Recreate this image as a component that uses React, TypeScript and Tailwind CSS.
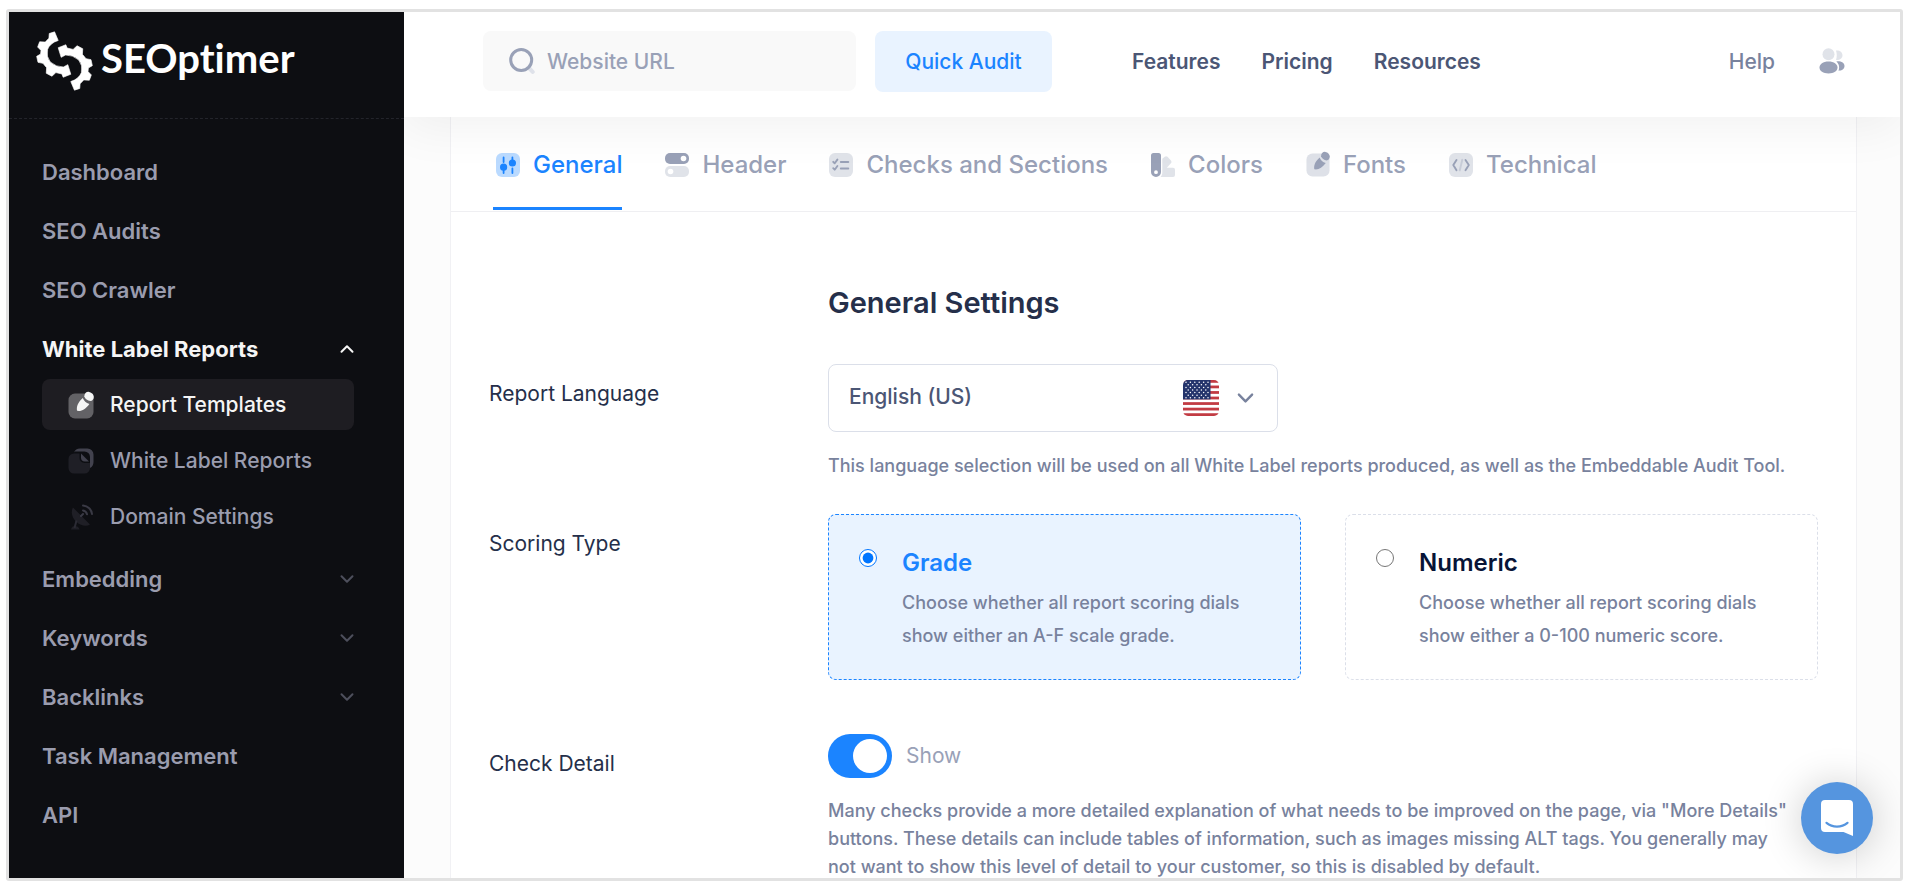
import React, { useState } from "react";

const GEAR_HALF =
  "M162 96 L146 101 L145 115 L134 127 L117 126 L111 142 L121 152 L120 163 L108 170 L112 188 L127 191 L138 204 L137 221 L154 230 L166 219 L184 223 L188 233 L211 224 L202 195 L189 202 Q167 203 149 187 Q136 171 141 149 Q148 130 173 122 Z";

function Logo() {
  return (
    <a href="#" className="flex h-[106px] items-start pt-[19px] pl-[27px] text-white">
      <svg viewBox="106 94 172 180" className="h-[60px] w-[57px] shrink-0" fill="currentColor" aria-hidden="true">
        <path d={GEAR_HALF} stroke="currentColor" strokeWidth="2" strokeLinejoin="round" />
        <path d={GEAR_HALF} transform="rotate(180 192 184)" stroke="currentColor" strokeWidth="2" strokeLinejoin="round" />
      </svg>
      <span className="ml-2 pt-[7px] font-['Lato',sans-serif] text-[40px] leading-[40px] font-bold [font-variant-ligatures:none]">SEOptimer</span>
    </a>
  );
}

function Chevron({ up = false, className = "" }: { up?: boolean; className?: string }) {
  return (
    <svg viewBox="0 0 14 10" className={className} fill="none" stroke="currentColor" strokeWidth="2" strokeLinecap="round" strokeLinejoin="round" aria-hidden="true">
      <path d={up ? "M1.5 7.8 7 2.2l5.500 5.600" : "M1.500 2.200 7 7.800l5.500-5.600"} />
    </svg>
  );
}

function PenIcon({ className = "" }: { className?: string }) {
  return (
    <svg viewBox="0 0 26 28" className={className} fill="currentColor" aria-hidden="true">
      <rect x="0.500" y="2.500" width="25" height="25" rx="6.500" opacity="0.320" />
      <path d="M9 19.800c-.5-4.300.3-7.800 5.800-12.900 1.200 3 3.200 5 6.600 6-4 5.200-7.200 7.500-12.400 6.900z" />
      <path d="M16.300 5.600C16.300 2.500 18.500.500 21 .900c2.800.5 4.900 2.700 4.800 5.300-.1 2-1.500 3.700-3.400 3.900-3-.4-5.200-2-6.100-4.500z" />
    </svg>
  );
}

function DocsIcon() {
  return (
    <svg viewBox="0 0 26 26" className="h-[26px] w-[26px]" aria-hidden="true">
      <path d="M6 4.500C7 2 9 .5 12 .5h7.500a6 6 0 0 1 6 6V14c0 2.600-1 4.700-3.500 6V9a5.500 5.500 0 0 0-5.500-5.500H6z" fill="#42424e" />
      <path d="M6 5.500h5.500V10a5 5 0 0 0 5 5H22v5a5.500 5.500 0 0 1-5.500 5.500H6A5.500 5.500 0 0 1 .5 20v-9A5.500 5.500 0 0 1 6 5.500z" fill="#1f1f26" />
      <path d="M13 5.500l8 8h-4a4 4 0 0 1-4-4z" fill="#42424e" />
    </svg>
  );
}

function DishIcon() {
  return (
    <svg viewBox="0 0 26 26" className="h-[26px] w-[26px]" aria-hidden="true">
      <path d="M5 3.500C2.500 8 4 14 8.500 18s10 4.600 13.500 2.500z" fill="#1f1f26" />
      <path d="M3 25.500c.5-2.500 2-3.500 4-3.500s4 1 4.500 3.500z" fill="#1f1f26" />
      <path d="M8.500 16.500 6.500 24" stroke="#2b2b34" strokeWidth="2" />
      <path d="M13 12l2-2M15 6.500c2 .3 3.500 1.600 4 3.800M15 1.500c5 .4 8.600 4 9 8.500" stroke="#3a3a45" strokeWidth="2" strokeLinecap="round" fill="none" />
    </svg>
  );
}

function SlidersIcon() {
  return (
    <svg viewBox="0 0 24 24" className="h-6 w-6" aria-hidden="true">
      <rect width="24" height="24" rx="6" fill="currentColor" opacity="0.300" />
      <g stroke="currentColor" strokeWidth="1.800" strokeLinecap="round" fill="currentColor">
        <path d="M7.600 4.500v4.500M7.600 17v3M16.400 4.500v2.500M16.400 15.500V20" />
        <circle cx="7.600" cy="14.200" r="2.700" />
        <circle cx="16.400" cy="10" r="2.700" />
      </g>
    </svg>
  );
}

function SwitchesIcon() {
  return (
    <svg viewBox="0 0 24 24" className="h-6 w-6" aria-hidden="true">
      <rect width="24" height="11" rx="5" fill="currentColor" />
      <circle cx="18.500" cy="5.500" r="2.800" fill="white" />
      <rect y="13" width="24" height="11" rx="5" fill="currentColor" opacity="0.300" />
      <circle cx="5.500" cy="18.500" r="2.800" fill="white" />
    </svg>
  );
}

function ChecklistIcon() {
  return (
    <svg viewBox="0 0 24 24" className="h-6 w-6" aria-hidden="true">
      <rect width="24" height="24" rx="6" fill="currentColor" opacity="0.300" />
      <g stroke="currentColor" strokeWidth="1.900" strokeLinecap="round" strokeLinejoin="round" fill="none">
        <path d="M4.200 8.800l1.500 1.500L8.400 6.600M4.200 15.200l1.500 1.500 2.700-3.700M11.800 9h7.500M11.800 15.500h7.500" />
      </g>
    </svg>
  );
}

function SwatchIcon() {
  return (
    <svg viewBox="0 0 24 24" className="h-6 w-6" aria-hidden="true">
      <path
        fillRule="evenodd"
        d="M2.500 0h5A2.500 2.500 0 0 1 10 2.500V19a5 5 0 0 1-10 0V2.500A2.500 2.500 0 0 1 2.500 0zM5 17.300a1.900 1.900 0 1 0 0 3.800 1.900 1.900 0 0 0 0-3.800z"
        fill="currentColor"
      />
      <path
        d="M11.300 5.800l2.400-2c1-.8 2-.8 2.800 0l3.400 3.700c.8.900.8 2 0 2.800L15.800 14.700H22a2 2 0 0 1 2 2V22a2 2 0 0 1-2 2H9.500c1.200-1.200 1.800-2.800 1.800-4.500z"
        fill="currentColor"
        opacity="0.300"
      />
    </svg>
  );
}

function CodeIcon() {
  return (
    <svg viewBox="0 0 24 24" className="h-6 w-6" aria-hidden="true">
      <rect width="24" height="24" rx="6" fill="currentColor" opacity="0.300" />
      <g stroke="currentColor" strokeWidth="1.900" strokeLinecap="round" strokeLinejoin="round" fill="none">
        <path d="M7.500 7 4.300 12l3.200 5.200M16.500 7l3.300 5-3.300 5.200" />
        <path d="M13.300 6.800l-2.600 10.600" opacity="0.350" />
      </g>
    </svg>
  );
}

function UsersIcon() {
  return (
    <svg viewBox="0 0 26 26" className="h-[26px] w-[26px] text-[#99a1b7]" fill="currentColor" aria-hidden="true">
      <ellipse cx="9.500" cy="6.300" rx="6" ry="6" opacity="0.300" />
      <path d="M17 2.500c3.800-.3 6.500 1.800 6.500 4.800s-2.700 5-6.500 4.700c1-3 1-6.500 0-9.500z" opacity="0.300" />
      <path d="M9.500 13.500c5.500 0 9 2.600 9 6.100 0 3.600-3.700 5.900-9 5.900s-9-2.300-9-5.900c0-3.500 3.500-6.100 9-6.100z" />
      <path d="M18.500 13.300c4.500 0 7 1.900 7 4.700 0 3-2.500 4.700-6 4.700 1.200-3 .9-6.600-2.200-9.300z" />
    </svg>
  );
}

function FlagIcon() {
  const stars: [number, number][] = [];
  for (let row = 0; row < 7; row++) {
    for (let col = 0; col < 6 - (row % 2); col++) {
      stars.push([3 + col * 4.400 + (row % 2) * 2.200, 2.200 + row * 2.600]);
    }
  }
  return (
    <svg viewBox="0 0 36 36" className="h-9 w-9" aria-hidden="true">
      <clipPath id="flag-shape">
        <rect width="36" height="36" rx="5" />
      </clipPath>
      <g clipPath="url(#flag-shape)">
        <rect width="36" height="36" fill="#ffffff" />
        {[0, 1, 2, 3, 4, 5, 6].map((i) => (
          <rect key={i} y={i * 5.540} width="36" height="2.770" fill="#c23b43" />
        ))}
        <rect width="27.500" height="19.400" fill="#25356c" />
        {stars.map(([cx, cy]) => (
          <circle key={cx + "-" + cy} cx={cx} cy={cy} r="0.750" fill="#ffffff" />
        ))}
      </g>
    </svg>
  );
}

function NavItem({ label, chevron = false }: { label: string; chevron?: boolean }) {
  return (
    <a href="#" className="flex h-[59px] items-center justify-between text-[22px] leading-7 font-semibold text-[#9a9cae]">
      {label}
      {chevron && <Chevron className="h-[10px] w-[14px] text-[#4d4f5c]" />}
    </a>
  );
}

function SubItem({ label, icon, active = false }: { label: string; icon: React.ReactNode; active?: boolean }) {
  return (
    <a
      href="#"
      className={
        active
          ? "flex h-[51px] items-center gap-4 rounded-lg bg-[#1e1d22] pl-[26px] text-[21px] font-medium text-[#f5f5f5]"
          : "flex h-[51px] items-center gap-4 rounded-lg pl-[26px] text-[21px] font-medium text-[#9a9cae]"
      }
    >
      {icon}
      {label}
    </a>
  );
}

function Sidebar() {
  return (
    <aside className="w-[395px] shrink-0 bg-[#0d0e12]">
      <Logo />
      <div className="border-t border-dashed border-[#23242b]" />
      <nav className="flex flex-col pt-[23px] pr-[50px] pl-[33px]">
        <NavItem label="Dashboard" />
        <NavItem label="SEO Audits" />
        <NavItem label="SEO Crawler" />
        <a href="#" className="flex h-[59px] items-center justify-between text-[22px] leading-7 font-bold text-[#f5f5f5]">
          White Label Reports
          <Chevron up className="h-[10px] w-[14px]" />
        </a>
        <div className="mt-px mb-[7px] flex flex-col gap-[5px]">
          <SubItem active label="Report Templates" icon={<PenIcon className="h-7 w-[26px]" />} />
          <SubItem label="White Label Reports" icon={<DocsIcon />} />
          <SubItem label="Domain Settings" icon={<DishIcon />} />
        </div>
        <NavItem label="Embedding" chevron />
        <NavItem label="Keywords" chevron />
        <NavItem label="Backlinks" chevron />
        <NavItem label="Task Management" />
        <NavItem label="API" />
      </nav>
    </aside>
  );
}

function TopBar() {
  return (
    <header className="relative z-10 flex h-[105px] shrink-0 items-center bg-white pr-[55px] pb-[7px] pl-[79px] text-xl shadow-[0_10px_50px_0_rgba(0,0,0,0.06)]">
      <label className="flex h-[60px] w-[373px] items-center rounded-lg bg-[#f9f9f9] pl-[26px]">
        <svg viewBox="0 0 26 26" className="h-[26px] w-[26px] shrink-0" fill="none" strokeWidth="3" strokeLinecap="round" aria-hidden="true">
          <path d="M19.500 19.500l4.200 4.400" stroke="#dfe2ea" strokeWidth="4" />
          <circle cx="12.200" cy="12" r="10.500" stroke="#99a1b7" />
        </svg>
        <input
          type="text"
          aria-label="Website URL"
          placeholder="Website URL"
          className="ml-3 w-full min-w-0 bg-transparent pt-0.5 text-[21px] font-medium text-[#99a1b7] outline-none placeholder:text-[#99a1b7]"
        />
      </label>
      <button className="ml-[19px] h-[61px] w-[177px] rounded-lg bg-[#e9f3ff] pt-0.5 text-[21px] font-medium text-[#1b84ff]">Quick Audit</button>
      <nav className="ml-20 flex gap-[41px] pt-0.5 text-[21px] font-semibold text-[#4b5675]">
        <a href="#">Features</a>
        <a href="#">Pricing</a>
        <a href="#">Resources</a>
      </nav>
      <a href="#" className="ml-auto pt-0.5 text-[21px] font-medium text-[#78829d]">Help</a>
      <button aria-label="Account" className="ml-11">
        <UsersIcon />
      </button>
    </header>
  );
}

const TABS: { label: string; icon: React.ReactNode }[] = [
  { label: "General", icon: <SlidersIcon /> },
  { label: "Header", icon: <SwitchesIcon /> },
  { label: "Checks and Sections", icon: <ChecklistIcon /> },
  { label: "Colors", icon: <SwatchIcon /> },
  { label: "Fonts", icon: <PenIcon className="-mt-0.5 h-[26px] w-6" /> },
  { label: "Technical", icon: <CodeIcon /> },
];

function Tabs() {
  return (
    <div role="tablist" className="flex gap-10 border-b border-[#efeff2] px-[42px] pb-px">
      {TABS.map((tab, i) => (
        <button
          key={tab.label}
          role="tab"
          aria-selected={i === 0}
          className={
            i === 0
              ? "flex h-[93px] items-center gap-[13px] border-b-3 border-[#1b84ff] pt-[5px] pl-[3px] text-2xl font-medium text-[#1b84ff]"
              : "flex h-[93px] items-center gap-[13px] border-b-3 border-transparent pt-[5px] pl-[3px] text-2xl font-medium text-[#99a1b7]"
          }
        >
          {tab.icon}
          {tab.label}
        </button>
      ))}
    </div>
  );
}

function ScoreCard({
  title,
  text,
  value,
  checked,
  onSelect,
}: {
  title: string;
  text: string;
  value: string;
  checked: boolean;
  onSelect: () => void;
}) {
  return (
    <label
      className={
        checked
          ? "flex flex-1 gap-[25px] rounded-lg border border-dashed border-[#1b84ff] bg-[#e9f3ff] px-[30px] pt-[31px] pb-[27px]"
          : "flex flex-1 gap-[25px] rounded-lg border border-dashed border-[#dbdfe9] px-[30px] pt-[31px] pb-[27px]"
      }
    >
      <input type="radio" name="scoring" value={value} checked={checked} onChange={onSelect} className="mt-[3px] h-[18px] w-[18px] shrink-0 accent-[#0075ff]" />
      <span className="flex flex-col gap-1.5">
        <span className={checked ? "text-2xl leading-[34px] font-semibold text-[#1b84ff]" : "text-2xl leading-[34px] font-semibold text-[#071437]"}>{title}</span>
        <span className="text-lg leading-[33px] font-medium text-[#78829d]">{text}</span>
      </span>
    </label>
  );
}

function Row({ label, htmlFor, children }: { label: string; htmlFor?: string; children: React.ReactNode }) {
  return (
    <div className="flex">
      <label htmlFor={htmlFor} className="w-[339px] shrink-0 pt-4 text-[21px] leading-7 text-[#252f4a]">
        {label}
      </label>
      <div className="min-w-0 flex-1">{children}</div>
    </div>
  );
}

function Settings() {
  const [scoring, setScoring] = useState("grade");
  return (
    <section className="px-[38px] pt-[73px]">
      <h1 className="pl-[339px] text-[29px] leading-9 font-semibold text-[#252f4a]">General Settings</h1>
      <div className="mt-[43px]">
        <Row label="Report Language" htmlFor="language">
          <div className="relative w-[450px]">
            <select
              id="language"
              className="h-[68px] w-full appearance-none rounded-lg border border-[#dbdfe9] bg-white pb-0.5 pl-[20px] text-[21px] font-medium text-[#4b5675]"
            >
              <option>English (US)</option>
            </select>
            <div className="pointer-events-none absolute inset-y-0 right-6 flex items-center gap-[18px] text-[#78829d]">
              <FlagIcon />
              <Chevron className="h-3 w-[17px]" />
            </div>
          </div>
          <p className="mt-5 text-lg leading-7 font-medium text-[#78829d]">
            This language selection will be used on all White Label reports produced, as well as the Embeddable Audit Tool.
          </p>
        </Row>
      </div>
      <div className="mt-[34px]">
        <Row label="Scoring Type">
          <div className="flex gap-11">
            <ScoreCard
              title="Grade"
              text="Choose whether all report scoring dials show either an A-F scale grade."
              value="grade"
              checked={scoring === "grade"}
              onSelect={() => setScoring("grade")}
            />
            <ScoreCard
              title="Numeric"
              text="Choose whether all report scoring dials show either a 0-100 numeric score."
              value="numeric"
              checked={scoring === "numeric"}
              onSelect={() => setScoring("numeric")}
            />
          </div>
        </Row>
      </div>
      <div className="mt-[54px]">
        <Row label="Check Detail" htmlFor="detail">
          <label className="flex items-center gap-[14px]">
            <input
              id="detail"
              type="checkbox"
              defaultChecked
              className="flex h-11 w-16 appearance-none items-center rounded-full bg-[#dbdfe9] px-[5px] before:h-[34px] before:w-[34px] before:rounded-full before:bg-white checked:justify-end checked:bg-[#1b84ff]"
            />
            <span className="text-[21px] text-[#99a1b7]">Show</span>
          </label>
          <p className="mt-[19px] pr-6 text-lg leading-7 font-medium text-[#78829d]">
            Many checks provide a more detailed explanation of what needs to be improved on the page, via "More Details" buttons. These details
            can include tables of information, such as images missing ALT tags. You generally may not want to show this level of detail to your
            customer, so this is disabled by default.
          </p>
        </Row>
      </div>
    </section>
  );
}

function ChatButton() {
  return (
    <button
      aria-label="Open chat"
      className="absolute right-[27px] bottom-6 z-20 flex h-[72px] w-[72px] items-center justify-center rounded-full bg-[#5595df] shadow-[0_2px_40px_0_rgba(0,0,0,0.2)]"
    >
      <svg viewBox="0 0 32 36" className="h-9 w-8" aria-hidden="true">
        <path d="M4 0h24a4 4 0 0 1 4 4v32l-9.500-4H4a4 4 0 0 1-4-4V4a4 4 0 0 1 4-4z" fill="#ffffff" />
        <path d="M5.500 22.800c6 5 15 5 21 0" stroke="#5595df" strokeWidth="2.200" strokeLinecap="round" fill="none" />
      </svg>
    </button>
  );
}

export default function App() {
  return (
    <div className="h-screen bg-white pt-[9px] pr-[7px] pb-[9px] pl-[6px] font-['Inter',sans-serif]">
      <div className="relative flex h-full overflow-hidden rounded-[3px] border-3 border-[#e2e2e2]">
        <Sidebar />
        <div className="flex min-w-0 flex-1 flex-col overflow-hidden bg-[#fcfcfc]">
          <TopBar />
          <main className="mr-[43px] ml-[46px] flex-1 border-x border-[#f1f1f4] bg-white">
            <Tabs />
            <Settings />
          </main>
        </div>
        <ChatButton />
      </div>
    </div>
  );
}
